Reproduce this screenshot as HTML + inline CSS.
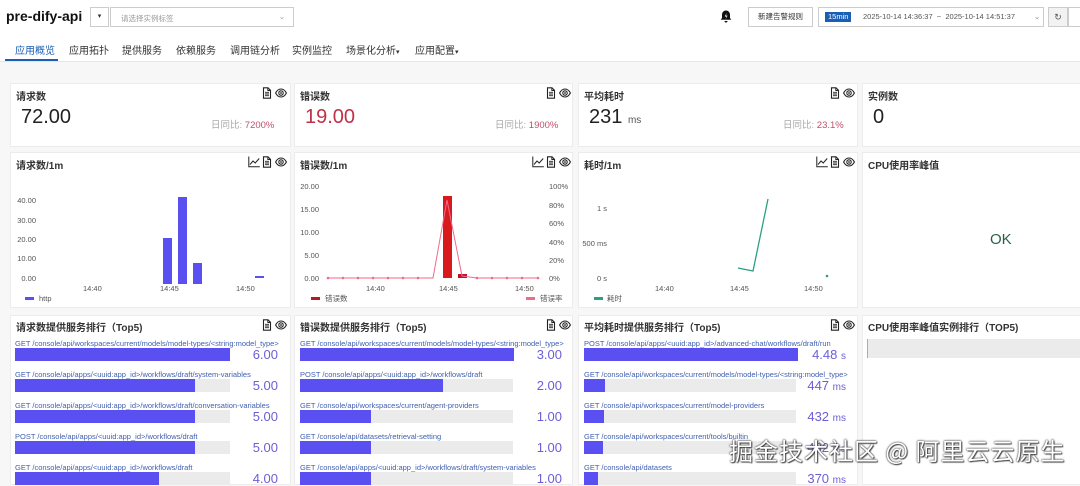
<!DOCTYPE html>
<html><head><meta charset="utf-8"><style>
*{margin:0;padding:0;box-sizing:border-box}
body{width:1080px;height:478px;overflow:hidden;background:#f7f7f8;font-family:"Liberation Sans","Noto Sans CJK SC",sans-serif;color:#333;position:relative}
.a{position:absolute;white-space:nowrap}
.top{position:absolute;left:0;top:0;width:1080px;height:62px;background:#fff;border-bottom:1px solid #e6e6e6}
.card{position:absolute;background:#fff;border:1px solid #ececec}
.t{font-size:10px;font-weight:bold;color:#333}
.tab{font-size:10px;color:#333;top:42px}
.lbl{font-size:7.5px;color:#3f5fb0}
.track{position:absolute;height:13px;background:#ebebeb}
.bar{position:absolute;height:13px;background:#5a4ff0;left:0;top:0}
.val{font-size:13px;color:#6b5fd6;text-align:right}
</style></head><body>
<svg width="0" height="0" style="position:absolute">
<defs>
<g id="doc"><path d="M1.5 0.8h4.5l2.5 2.5v7.9h-7z" fill="none" stroke="#222" stroke-width="1.1"/><path d="M5.8 0.8v2.7h2.7" fill="none" stroke="#222" stroke-width="0.9"/><path d="M3 5.3h4M3 7h4M3 8.7h4" stroke="#222" stroke-width="0.9"/></g>
<g id="eye"><path d="M0.6 6C2 3.3 4 2 6 2s4 1.3 5.4 4C10 8.7 8 10 6 10S2 8.7 0.6 6z" fill="none" stroke="#222" stroke-width="1.1"/><circle cx="6" cy="6" r="2.2" fill="none" stroke="#222" stroke-width="1.1"/><circle cx="6" cy="6" r="0.9" fill="#222"/></g>
<g id="chart"><path d="M0.8 0.5v10.3h11" fill="none" stroke="#222" stroke-width="1"/><path d="M2 8.5l3-3.5 2.2 2 4-4.5" fill="none" stroke="#222" stroke-width="1"/></g>
</defs></svg>
<div class="top"></div>
<div class="a" style="left:6px;top:8px;font-size:14px;font-weight:bold;color:#111">pre-dify-api</div>
<div class="a" style="left:90px;top:7px;width:19px;height:20px;border:1px solid #ccc;background:#fff;font-size:7px;text-align:center;line-height:18px">▾</div>
<div class="a" style="left:110px;top:7px;width:184px;height:20px;border:1px solid #ccc;background:#fff;font-size:7.5px;color:#999;padding:5px 10px">请选择实例标签<span style="position:absolute;right:8px;top:4px;color:#999">⌄</span></div>
<svg class="a" style="left:720px;top:10px" width="12" height="13" viewBox="0 0 12 13"><path d="M6 0.5c-2.5 0-4 2-4 4.5v3L0.7 9.8h10.6L10 8V5c0-2.5-1.5-4.5-4-4.5zM4.5 11a1.5 1.5 0 0 0 3 0z" fill="#111"/><path d="M6.5 3L4.8 6.5h1.6L5.6 9 7.6 5.6H6z" fill="#fff"/></svg>
<div class="a" style="left:748px;top:7px;width:65px;height:20px;border:1px solid #ccc;background:#fff;font-size:7.5px;text-align:center;line-height:18px">新建告警规则</div>
<div class="a" style="left:818px;top:7px;width:226px;height:20px;border:1px solid #ccc;background:#fff;font-size:7.5px;color:#555;line-height:18px"><span style="position:absolute;left:6px;top:4px;height:10px;line-height:10px;background:#1a5fb4;color:#fff;padding:0 3px;font-size:7.5px">15min</span><span style="position:absolute;left:44px">2025-10-14 14:36:37 &nbsp;~&nbsp; 2025-10-14 14:51:37</span><span style="position:absolute;left:215px;color:#888">⌄</span></div>
<div class="a" style="left:1048px;top:7px;width:20px;height:20px;border:1px solid #ccc;background:#f2f2f2;font-size:9px;text-align:center;line-height:18px;color:#555">↻</div>
<div class="a" style="left:1068px;top:7px;width:14px;height:20px;border:1px solid #ccc;background:#fff"></div>
<div class="a tab" style="left:15px;color:#1a5fb4">应用概览</div>
<div class="a" style="left:5px;top:59px;width:53px;height:2px;background:#1a5fb4"></div>
<div class="a tab" style="left:69px">应用拓扑</div>
<div class="a tab" style="left:122px">提供服务</div>
<div class="a tab" style="left:176px">依赖服务</div>
<div class="a tab" style="left:230px">调用链分析</div>
<div class="a tab" style="left:292px">实例监控</div>
<div class="a tab" style="left:346px">场景化分析<span style="font-size:7px">▾</span></div>
<div class="a tab" style="left:415px">应用配置<span style="font-size:7px">▾</span></div>

<!-- row 1 -->
<div class="card" style="left:10px;top:83px;width:281px;height:64px"></div>
<div class="card" style="left:294px;top:83px;width:279px;height:64px"></div>
<div class="card" style="left:578px;top:83px;width:280px;height:64px"></div>
<div class="card" style="left:862px;top:83px;width:230px;height:64px"></div>
<div class="a t" style="left:16px;top:88px">请求数</div>
<div class="a t" style="left:300px;top:88px">错误数</div>
<div class="a t" style="left:584px;top:88px">平均耗时</div>
<div class="a t" style="left:868px;top:88px">实例数</div>
<svg class="a" style="left:262px;top:87px" width="26" height="12"><use href="#doc"/><use href="#eye" x="13"/></svg>
<svg class="a" style="left:546px;top:87px" width="26" height="12"><use href="#doc"/><use href="#eye" x="13"/></svg>
<svg class="a" style="left:830px;top:87px" width="26" height="12"><use href="#doc"/><use href="#eye" x="13"/></svg>
<div class="a" style="left:21px;top:106px;font-size:20px;color:#222">72.00</div>
<div class="a" style="left:305px;top:106px;font-size:20px;color:#c0304a">19.00</div>
<div class="a" style="left:589px;top:106px;font-size:20px;color:#222">231 <span style="font-size:10px;color:#555">ms</span></div>
<div class="a" style="left:873px;top:106px;font-size:20px;color:#222">0</div>
<div class="a" style="left:211px;top:117px;font-size:9.5px;color:#aaa">日同比: <span style="color:#c0506a">7200%</span></div>
<div class="a" style="left:495px;top:117px;font-size:9.5px;color:#aaa">日同比: <span style="color:#c0506a">1900%</span></div>
<div class="a" style="left:783px;top:117px;font-size:9.5px;color:#aaa">日同比: <span style="color:#c0506a">23.1%</span></div>

<!-- row 2 -->
<div class="card" style="left:10px;top:152px;width:281px;height:156px"></div>
<div class="card" style="left:294px;top:152px;width:279px;height:156px"></div>
<div class="card" style="left:578px;top:152px;width:280px;height:156px"></div>
<div class="card" style="left:862px;top:152px;width:230px;height:156px"></div>
<div class="a t" style="left:16px;top:157px">请求数/1m</div>
<div class="a t" style="left:300px;top:157px">错误数/1m</div>
<div class="a t" style="left:584px;top:157px">耗时/1m</div>
<div class="a t" style="left:868px;top:157px">CPU使用率峰值</div>
<svg class="a" style="left:248px;top:156px" width="40" height="12"><use href="#chart"/><use href="#doc" x="14"/><use href="#eye" x="27"/></svg>
<svg class="a" style="left:532px;top:156px" width="40" height="12"><use href="#chart"/><use href="#doc" x="14"/><use href="#eye" x="27"/></svg>
<svg class="a" style="left:816px;top:156px" width="40" height="12"><use href="#chart"/><use href="#doc" x="14"/><use href="#eye" x="27"/></svg>
<div class="a" style="left:990px;top:231px;font-size:15px;color:#2a6048">OK</div>
<svg class="a" style="left:0;top:0" width="1080" height="478" font-family="Liberation Sans" font-size="7.5" fill="#555">
<g text-anchor="end"><text x="36" y="203">40.00</text><text x="36" y="223">30.00</text><text x="36" y="242">20.00</text><text x="36" y="261">10.00</text><text x="36" y="281">0.00</text></g>
<text x="83" y="291">14:40</text><text x="160" y="291">14:45</text><text x="236" y="291">14:50</text>
<rect x="163" y="238" width="9" height="46" fill="#5a4ff0"/><rect x="178" y="197" width="9" height="87" fill="#5a4ff0"/><rect x="193" y="263" width="9" height="21" fill="#5a4ff0"/><rect x="255" y="276" width="9" height="2" fill="#5a4ff0"/>
<rect x="25" y="297" width="9" height="3" fill="#5a4ff0"/><text x="39" y="301">http</text>
<g text-anchor="end"><text x="319" y="189">20.00</text><text x="319" y="212">15.00</text><text x="319" y="235">10.00</text><text x="319" y="258">5.00</text><text x="319" y="281">0.00</text></g>
<g><text x="549" y="189">100%</text><text x="549" y="208">80%</text><text x="549" y="226">60%</text><text x="549" y="245">40%</text><text x="549" y="263">20%</text><text x="549" y="281">0%</text></g>
<text x="366" y="291">14:40</text><text x="439" y="291">14:45</text><text x="515" y="291">14:50</text>
<rect x="443" y="196" width="9" height="82" fill="#d8191e"/><rect x="458" y="274" width="9" height="4" fill="#c0102a"/>
<polyline points="328,278 343,278 358,278 373,278 388,278 403,278 418,278 433,278 447,200 462,276 477,278 492,278 507,278 522,278 538,278" fill="none" stroke="#f06a8a" stroke-width="1"/>
<g fill="#f06a8a"><circle cx="328" cy="278" r="1.3"/><circle cx="343" cy="278" r="1.3"/><circle cx="358" cy="278" r="1.3"/><circle cx="373" cy="278" r="1.3"/><circle cx="388" cy="278" r="1.3"/><circle cx="403" cy="278" r="1.3"/><circle cx="418" cy="278" r="1.3"/><circle cx="477" cy="278" r="1.3"/><circle cx="492" cy="278" r="1.3"/><circle cx="507" cy="278" r="1.3"/><circle cx="522" cy="278" r="1.3"/><circle cx="538" cy="278" r="1.3"/></g>
<rect x="311" y="297" width="9" height="3" fill="#b81822"/><text x="325" y="301">错误数</text>
<rect x="526" y="297" width="9" height="3" fill="#f06a8a"/><text x="540" y="301">错误率</text>
<g text-anchor="end"><text x="607" y="211">1 s</text><text x="607" y="246">500 ms</text><text x="607" y="281">0 s</text></g>
<text x="655" y="291">14:40</text><text x="730" y="291">14:45</text><text x="804" y="291">14:50</text>
<polyline points="738,268 753,271 768,199" fill="none" stroke="#2aa080" stroke-width="1.3"/><circle cx="827" cy="276" r="1.3" fill="#2aa080"/>
<rect x="594" y="297" width="9" height="3" fill="#2aa080"/><text x="607" y="301">耗时</text>
</svg>

<!-- row 3 -->
<div class="card" style="left:10px;top:315px;width:281px;height:170px"></div>
<div class="card" style="left:294px;top:315px;width:279px;height:170px"></div>
<div class="card" style="left:578px;top:315px;width:280px;height:170px"></div>
<div class="card" style="left:862px;top:315px;width:230px;height:170px"></div>
<div class="a t" style="left:16px;top:319px">请求数提供服务排行（Top5)</div>
<div class="a t" style="left:300px;top:319px">错误数提供服务排行（Top5)</div>
<div class="a t" style="left:584px;top:319px">平均耗时提供服务排行（Top5)</div>
<div class="a t" style="left:868px;top:319px">CPU使用率峰值实例排行（TOP5)</div>
<svg class="a" style="left:262px;top:319px" width="26" height="12"><use href="#doc"/><use href="#eye" x="13"/></svg>
<svg class="a" style="left:546px;top:319px" width="26" height="12"><use href="#doc"/><use href="#eye" x="13"/></svg>
<svg class="a" style="left:830px;top:319px" width="26" height="12"><use href="#doc"/><use href="#eye" x="13"/></svg>
<div class="track" style="left:867px;top:339px;width:215px;height:19px;border-left:1px solid #aab"></div>

<div class="a lbl" style="left:15px;top:339px">GET /console/api/workspaces/current/models/model-types/&lt;string:model_type&gt;</div>
<div class="track" style="left:15px;top:348px;width:215px"><div class="bar" style="width:215px"></div></div><div class="a val" style="left:230px;top:347px;width:48px">6.00</div>
<div class="a lbl" style="left:15px;top:370px">GET /console/api/apps/&lt;uuid:app_id&gt;/workflows/draft/system-variables</div>
<div class="track" style="left:15px;top:379px;width:215px"><div class="bar" style="width:180px"></div></div><div class="a val" style="left:230px;top:378px;width:48px">5.00</div>
<div class="a lbl" style="left:15px;top:401px">GET /console/api/apps/&lt;uuid:app_id&gt;/workflows/draft/conversation-variables</div>
<div class="track" style="left:15px;top:410px;width:215px"><div class="bar" style="width:180px"></div></div><div class="a val" style="left:230px;top:409px;width:48px">5.00</div>
<div class="a lbl" style="left:15px;top:432px">POST /console/api/apps/&lt;uuid:app_id&gt;/workflows/draft</div>
<div class="track" style="left:15px;top:441px;width:215px"><div class="bar" style="width:180px"></div></div><div class="a val" style="left:230px;top:440px;width:48px">5.00</div>
<div class="a lbl" style="left:15px;top:463px">GET /console/api/apps/&lt;uuid:app_id&gt;/workflows/draft</div>
<div class="track" style="left:15px;top:472px;width:215px"><div class="bar" style="width:144px"></div></div><div class="a val" style="left:230px;top:471px;width:48px">4.00</div>

<div class="a lbl" style="left:300px;top:339px">GET /console/api/workspaces/current/models/model-types/&lt;string:model_type&gt;</div>
<div class="track" style="left:300px;top:348px;width:214px"><div class="bar" style="width:214px"></div></div><div class="a val" style="left:514px;top:347px;width:48px">3.00</div>
<div class="a lbl" style="left:300px;top:370px">POST /console/api/apps/&lt;uuid:app_id&gt;/workflows/draft</div>
<div class="track" style="left:300px;top:379px;width:213px"><div class="bar" style="width:143px"></div></div><div class="a val" style="left:514px;top:378px;width:48px">2.00</div>
<div class="a lbl" style="left:300px;top:401px">GET /console/api/workspaces/current/agent-providers</div>
<div class="track" style="left:300px;top:410px;width:213px"><div class="bar" style="width:71px"></div></div><div class="a val" style="left:514px;top:409px;width:48px">1.00</div>
<div class="a lbl" style="left:300px;top:432px">GET /console/api/datasets/retrieval-setting</div>
<div class="track" style="left:300px;top:441px;width:213px"><div class="bar" style="width:71px"></div></div><div class="a val" style="left:514px;top:440px;width:48px">1.00</div>
<div class="a lbl" style="left:300px;top:463px">GET /console/api/apps/&lt;uuid:app_id&gt;/workflows/draft/system-variables</div>
<div class="track" style="left:300px;top:472px;width:213px"><div class="bar" style="width:71px"></div></div><div class="a val" style="left:514px;top:471px;width:48px">1.00</div>

<div class="a lbl" style="left:584px;top:339px">POST /console/api/apps/&lt;uuid:app_id&gt;/advanced-chat/workflows/draft/run</div>
<div class="track" style="left:584px;top:348px;width:214px"><div class="bar" style="width:214px"></div></div><div class="a val" style="left:790px;top:347px;width:56px">4.48 <span style="font-size:10px">s</span></div>
<div class="a lbl" style="left:584px;top:370px">GET /console/api/workspaces/current/models/model-types/&lt;string:model_type&gt;</div>
<div class="track" style="left:584px;top:379px;width:212px"><div class="bar" style="width:21px"></div></div><div class="a val" style="left:790px;top:378px;width:56px">447 <span style="font-size:10px">ms</span></div>
<div class="a lbl" style="left:584px;top:401px">GET /console/api/workspaces/current/model-providers</div>
<div class="track" style="left:584px;top:410px;width:212px"><div class="bar" style="width:20px"></div></div><div class="a val" style="left:790px;top:409px;width:56px">432 <span style="font-size:10px">ms</span></div>
<div class="a lbl" style="left:584px;top:432px">GET /console/api/workspaces/current/tools/builtin</div>
<div class="track" style="left:584px;top:441px;width:212px"><div class="bar" style="width:19px"></div></div><div class="a val" style="left:790px;top:440px;width:56px">402 <span style="font-size:10px">ms</span></div>
<div class="a lbl" style="left:584px;top:463px">GET /console/api/datasets</div>
<div class="track" style="left:584px;top:472px;width:212px"><div class="bar" style="width:14px"></div></div><div class="a val" style="left:790px;top:471px;width:56px">370 <span style="font-size:10px">ms</span></div>

<div class="a" style="left:729px;top:432px;font-size:24px;color:#fff;font-family:'Noto Sans CJK SC',sans-serif;text-shadow:0 0 2px #333,0 0 1px #333,1px 1px 1px #555;letter-spacing:1px">掘金技术社区 @ 阿里云云原生</div>
</body></html>
